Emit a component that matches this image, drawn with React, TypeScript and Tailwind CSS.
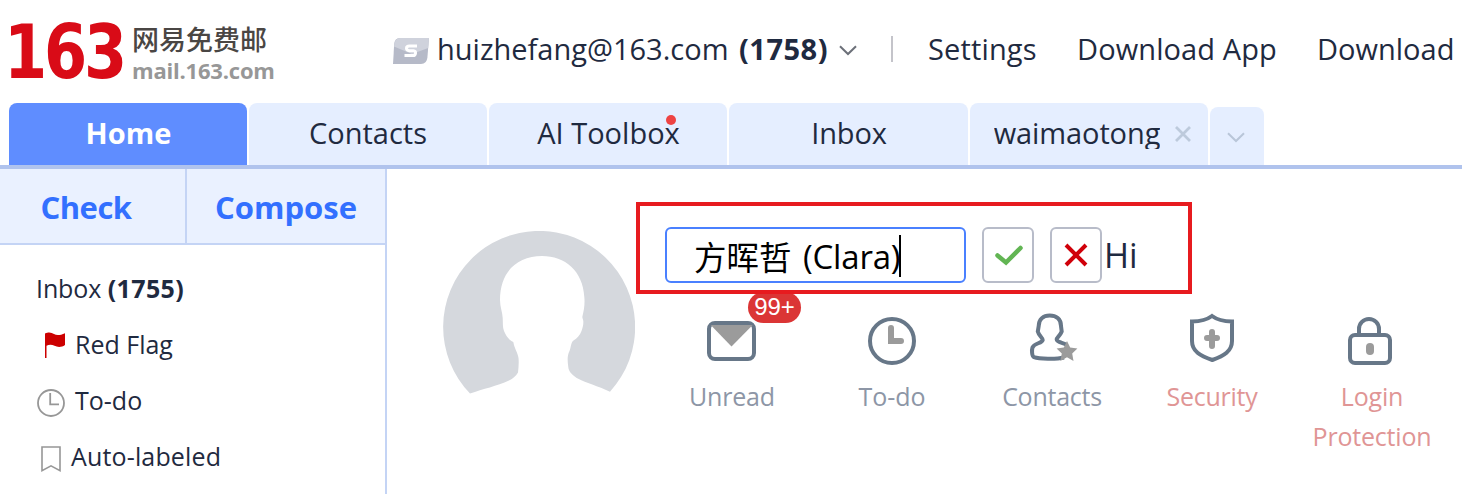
import type { ReactNode } from 'react';

function Chevron({ className }: { className: string }) {
  return (
    <svg width="18" height="11" viewBox="0 0 18 11" className={className} fill="none" stroke="currentColor" strokeWidth="2">
      <path d="M1 1.2 9 9l8-7.8" />
    </svg>
  );
}

function Header() {
  return (
    <header className="flex h-[103px] shrink-0 pt-[20px] text-[29px] leading-[57px] whitespace-nowrap">
      <div className="flex w-[393px] shrink-0 pl-[4px]">
        <div className="w-[126px] shrink-0 origin-left scale-x-[0.92] font-['DejaVu_Sans_Condensed','DejaVu_Sans',sans-serif] text-[75px] leading-[65px] font-bold tracking-[-3.500px] text-[#d90b17]">
          163
        </div>
        <div className="flex flex-col pl-[2px]">
          <span className="h-[33px] font-['Noto_Sans_CJK_SC',sans-serif] text-[27px] leading-[38px] font-medium text-[#4a4644]">网易免费邮</span>
          <span className="h-[33px] text-[22px] leading-[35px] font-bold tracking-[-0.200px] text-[#979797]">mail.163.com</span>
        </div>
      </div>
      <svg width="36" height="26" viewBox="0 0 36 26" className="mt-[18px] mr-[8px] shrink-0">
        <path d="M7 0h29l-1.6 19.500Q33.800 26 28 26H0L1.200 6Q1.700 0 7 0Z" fill="#b6bac8" />
        <path d="M7 0h29l-.8 10L19 16 1 8.500Q1.400 0 7 0Z" fill="#cfd2dc" />
        <path d="M24 8h-7.500q-3 0-3 2.200t3 2.500h4q2.300.2 2 2.500t-2.600 2.400H11.500" fill="none" stroke="#fff" strokeWidth="3" />
      </svg>
      <span className="w-[302px] shrink-0">huizhefang@163.com</span>
      <span className="w-[100px] shrink-0 font-bold tracking-[0.500px]">(1758)</span>
      <Chevron className="mt-[25px] shrink-0 text-[#6c7079]" />
      <span className="mt-[16px] mr-[35px] ml-[34px] h-[26px] w-[2px] shrink-0 bg-[#c4c4ca]" />
      <span className="w-[149px] shrink-0 tracking-[0.150px]">Settings</span>
      <span className="w-[240px] shrink-0 tracking-[0.100px]">Download App</span>
      <span className="shrink-0">Download</span>
    </header>
  );
}

function Tab({ children, className }: { children: ReactNode; className: string }) {
  return <div className={`flex h-[62px] shrink-0 items-start justify-center rounded-t-[8px] text-[29px] leading-[60px] ${className}`}>{children}</div>;
}

function Tabs() {
  return (
    <nav className="flex h-[66px] shrink-0 items-end gap-[2px] border-b-[4px] border-[#b0c3ed] pl-[9px]">
      <Tab className="w-[238px] bg-[#5f8dff] pl-px font-bold text-white">Home</Tab>
      <Tab className="w-[238px] bg-[#e5eeff]">Contacts</Tab>
      <Tab className="w-[238px] bg-[#e5eeff] pl-px">
        <span className="relative">
          AI Toolbox
          <i className="absolute top-[12px] right-[4px] size-[10px] rounded-full bg-[#ee4343]" />
        </span>
      </Tab>
      <Tab className="w-[239px] bg-[#e5eeff] pl-px tracking-[-0.200px]">Inbox</Tab>
      <Tab className="w-[238px] bg-[#e5eeff]">
        <span className="ml-[7px] block h-[46px] overflow-hidden tracking-[-0.100px]">waimaotong</span>
        <svg width="16" height="16" viewBox="0 0 16 16" className="mt-[23px] ml-[15px]" stroke="#bdcadc" strokeWidth="2.800">
          <path d="m1 1 14 14M15 1 1 15" />
        </svg>
      </Tab>
      <div className="flex h-[58px] w-[54px] justify-center rounded-t-[8px] bg-[#e5eeff] pr-[2px]">
        <Chevron className="mt-[25px] text-[#b9c6d9]" />
      </div>
    </nav>
  );
}

function Folder({ icon, label, className }: { icon: ReactNode; label: string; className: string }) {
  return (
    <li className="flex h-[56px]">
      {icon}
      <span className={className}>{label}</span>
    </li>
  );
}

function Sidebar() {
  return (
    <aside className="flex w-[387px] shrink-0 flex-col border-r-2 border-[#c4d4f5]">
      <div className="flex h-[76px] border-b-2 border-[#c4d4f5] bg-[#eaf1ff] text-[31px] leading-[76px] font-bold text-[#3370ff]">
        <button className="flex w-[187px] justify-center border-r-2 border-[#c4d4f5] pr-[13px] tracking-[-0.500px]">Check</button>
        <button className="flex w-[198px] justify-center">Compose</button>
      </div>
      <ul className="pt-[15px] pl-[37px] text-[25px] leading-[56px] whitespace-nowrap">
        <li className="-ml-px h-[56px] tracking-[-0.100px]">
          Inbox <b className="tracking-[0.400px]">(1755)</b>
        </li>
        <Folder
          label="Red Flag"
          className="ml-[10px]"
          icon={
            <svg width="28" height="28" viewBox="0 0 28 28" className="mt-[16px]">
              <path d="M8 1.500C12-.5 14.500.5 17 2s6 1.500 11-.8V13c-3.500 2.600-7.500 2.400-10.500.8S12 12.500 9.500 13.700V26H8Z" fill="#c00" />
            </svg>
          }
        />
        <Folder
          label="To-do"
          className="ml-[10px]"
          icon={
            <svg width="28" height="28" viewBox="0 0 28 28" className="mt-[17px]" fill="none" stroke="#979797" strokeWidth="1.800">
              <circle cx="14" cy="14" r="13" />
              <path d="M13.200 4v11.400H22" />
            </svg>
          }
        />
        <Folder
          label="Auto-labeled"
          className="ml-[6px] tracking-[0.150px]"
          icon={
            <svg width="28" height="28" viewBox="0 0 28 28" className="mt-[18px]" fill="none" stroke="#979797" strokeWidth="1.600">
              <path d="M5 1h18v23.700l-9-4.800-9 4.800Z" />
            </svg>
          }
        />
      </ul>
    </aside>
  );
}

function Shortcut({ children, label, className }: { children: ReactNode; label: string; className: string }) {
  return (
    <div className="relative flex w-[160px] flex-col items-center">
      <svg width="64" height="64" viewBox="0 0 64 64" fill="none" stroke="#677788" strokeWidth="4">
        {children}
      </svg>
      <span className={`mt-[4px] w-[130px] text-center text-[25px] leading-[40px] ${className}`}>{label}</span>
    </div>
  );
}

function NameEditor() {
  return (
    <div className="relative z-10 flex h-[92px] w-[556px] border-4 border-[#e71b1f] pt-[21px] pl-[25px] text-[33px] leading-[56px]">
      <div className="flex h-[56px] w-[301px] rounded-[6px] border-2 border-[#4a80ff] pl-[27px] leading-[55px] text-black">
        <span className="w-[109px] font-['Noto_Sans_CJK_SC',sans-serif] text-[32.500px] leading-[54px]">方晖哲</span>
        <span className="tracking-[-0.200px]">(Clara)</span>
        <i className="-ml-px mt-[6px] h-[42px] w-[2px] bg-black" />
      </div>
      <button className="ml-[16px] flex h-[56px] w-[52px] items-center justify-center rounded-[6px] border-2 border-[#b8bcc9]">
        <svg width="28" height="22" viewBox="0 0 28 22" fill="none" stroke="#62b553" strokeWidth="4.500" className="mt-px ml-[2px]">
          <path d="m2.500 10.500 8.500 7L25.500 3" strokeLinejoin="miter" strokeLinecap="round" />
        </svg>
      </button>
      <button className="ml-[16px] flex h-[56px] w-[52px] items-center justify-center rounded-[6px] border-2 border-[#b8bcc9]">
        <svg width="24" height="24" viewBox="0 0 24 24" stroke="#d0000a" strokeWidth="4">
          <path d="m2 2 20 20M22 2 2 22" />
        </svg>
      </button>
      <span className="ml-[2px] text-[34px] leading-[57px]">Hi</span>
    </div>
  );
}

export default function App() {
  return (
    <div className="flex h-[494px] w-[1462px] flex-col overflow-hidden bg-white font-['Open_Sans','Noto_Sans_CJK_SC',sans-serif] text-[#1f2a40]">
      <Header />
      <Tabs />
      <div className="flex min-h-0 grow">
        <Sidebar />
        <main className="flex pt-[33px] pl-[56px]">
          <svg width="192" height="164" viewBox="0 0 192 164" className="mt-[29px] mr-[1px] shrink-0">
            <path
              d="M27 162.500A96 96 0 1 1 167 160.700C155 155 143 152 133.700 147C127 142.500 125.500 139 125.300 136C124.500 130 124 125 126.500 120C128 116 128 111 130.500 109.500C134 107.500 137 104 138.500 100C140 96 140.500 93 140.300 90C140 88 139 87 139.500 85C141 79 142 73 141.300 66C140 40 122 25 99 25C75 25 57 40 57 69C57 76 59.500 81 59.700 87C60 92 59.500 96 61 100C63 105 66 109 70.300 111C71.500 118 75 122 75.500 127C76 132 75.500 137 75 141.500C73 145 70 147.500 66 149.500C54 155 40 158 27 162.500Z"
              fill="#d5d8dd"
            />
          </svg>
          <div className="flex flex-col">
            <NameEditor />
            <div className="mt-[14px] ml-[16px] flex items-start text-[#8d96a6]">
              <div className="relative">
                <Shortcut label="Unread" className="tracking-[-0.200px]">
                  <rect x="9" y="15" width="45" height="36" rx="6" />
                  <path d="M10.700 17h42L31.500 38.500Z" fill="#9b9b9b" stroke="none" />
                </Shortcut>
                <span className="absolute -top-[16px] left-[96px] h-[31px] w-[53px] rounded-full bg-[#db3535] text-center font-['Liberation_Sans',sans-serif] text-[24px] leading-[29px] text-white">99+</span>
              </div>
              <Shortcut label="To-do" className="">
                <circle cx="32" cy="33" r="22" />
                <path d="M31 20v13h10" stroke="#9b9b9b" strokeWidth="6" strokeLinecap="round" />
              </Shortcut>
              <Shortcut label="Contacts" className="tracking-[-0.250px]">
                <path d="M47 37C43 34.500 37 34.500 36.700 31.500C36.700 29.500 40 28 41.700 23.500L41 18C41 11 36 7.500 29.700 7.500S18.800 11 18.700 18L17.800 23.500C19 28 22.700 29.500 22.700 32C22 35.500 14 35 12.500 39.500C11.700 42 11.700 48 14 49.200C19 51 36 51.500 44 49.500" />
                <path d="m47 33 3.200 6.500 7.200.9-5.200 5 1.300 7.500-6.500-3.600-6.700 3.600 1.500-7.500-5.200-5 7.200-.9Z" fill="#9b9b9b" stroke="none" />
              </Shortcut>
              <Shortcut label="Security" className="tracking-[-0.250px] text-[#e09595]">
                <path d="M12 13.500Q25 13.200 32 8Q39 13.200 52 13.500V33C52 43 44 48 32.300 52C20 48 12 43 12 33Z" />
                <path d="M27 30h10M32 24v14" stroke="#9b9b9b" strokeWidth="6" strokeLinecap="round" />
              </Shortcut>
              <Shortcut label="Login Protection" className="tracking-[-0.200px] text-[#e09595]">
                <rect x="10" y="27" width="40" height="28" rx="5" />
                <path d="M19 27v-6a10 10 0 0 1 20 0v6" />
                <rect x="26" y="35" width="8" height="12" rx="4" fill="#9b9b9b" stroke="none" />
              </Shortcut>
            </div>
          </div>
        </main>
      </div>
    </div>
  );
}
